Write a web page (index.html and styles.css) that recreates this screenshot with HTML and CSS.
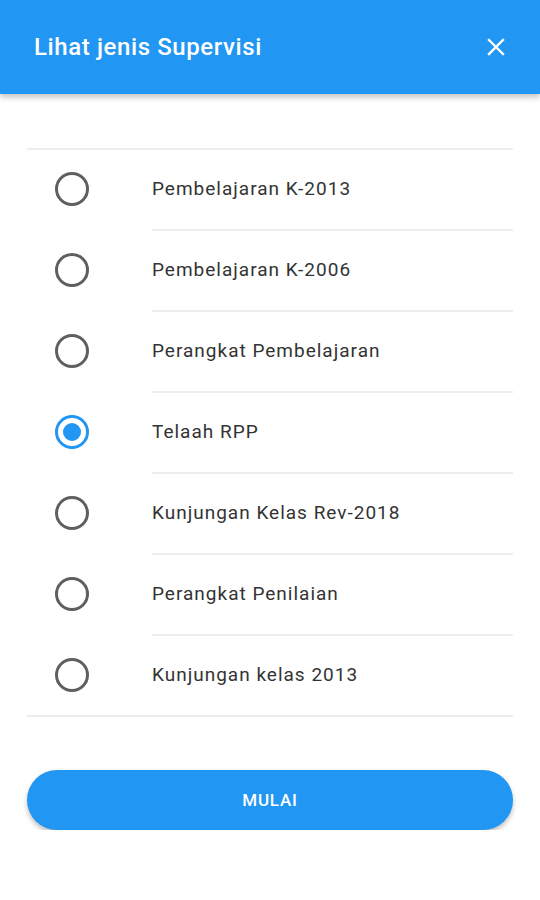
FILE: index.html
```html
<!doctype html>
<html lang="id">
  <head>
    <meta charset="UTF-8" />
    <meta name="viewport" content="width=device-width, initial-scale=1.0" />
    <title>Lihat jenis Supervisi</title>
    <link rel="stylesheet" href="styles.css">
  </head>
  <body>
    <header class="app-bar">
      <h1>Lihat jenis Supervisi</h1>
      <button class="close-btn" aria-label="Tutup">
        <svg width="24" height="24" viewBox="0 0 24 24">
          <path d="M5 5L19 19M19 5L5 19" stroke="#fff" stroke-width="2.4" stroke-linecap="square" fill="none" />
        </svg>
      </button>
    </header>

    <div class="content">
      <ul class="options">
        <li class="option">
          <span class="radio"></span>
          <span class="label">Pembelajaran K-2013</span>
        </li>
        <li class="option">
          <span class="radio"></span>
          <span class="label">Pembelajaran K-2006</span>
        </li>
        <li class="option">
          <span class="radio"></span>
          <span class="label">Perangkat Pembelajaran</span>
        </li>
        <li class="option">
          <span class="radio checked"></span>
          <span class="label">Telaah RPP</span>
        </li>
        <li class="option">
          <span class="radio"></span>
          <span class="label">Kunjungan Kelas Rev-2018</span>
        </li>
        <li class="option">
          <span class="radio"></span>
          <span class="label">Perangkat Penilaian</span>
        </li>
        <li class="option">
          <span class="radio"></span>
          <span class="label">Kunjungan kelas 2013</span>
        </li>
      </ul>

      <button class="start-btn">MULAI</button>
    </div>
  </body>
</html>
```

FILE: styles.css
```css
body {
  margin: 0;
  padding: 0;
  font-family: Roboto, 'Liberation Sans', Arial, sans-serif;
  background: #fff;
  color: #333;
}

.app-bar {
  height: 94px;
  background: #2196f3;
  display: flex;
  align-items: center;
  justify-content: space-between;
  padding: 0 32px 0 34px;
  box-sizing: border-box;
  box-shadow: 0 3px 6px rgba(0, 0, 0, 0.25);
  position: relative;
  z-index: 1;
}

.app-bar h1 {
  margin: 0;
  color: #fff;
  font-size: 24px;
  font-weight: 500;
  letter-spacing: 0.6px;
}

.close-btn {
  background: none;
  border: none;
  padding: 0;
  width: 24px;
  height: 24px;
  cursor: pointer;
}

.close-btn svg {
  display: block;
}

.content {
  padding: 54px 27px 0;
}

.options {
  list-style: none;
  margin: 0;
  padding: 0;
  border-top: 2px solid #ededed;
  border-bottom: 2px solid #ededed;
}

.option {
  display: flex;
  height: 81px;
}

.radio {
  width: 125px;
  flex: none;
  position: relative;
}

.radio::before {
  content: '';
  position: absolute;
  left: 28px;
  top: 22px;
  width: 28px;
  height: 28px;
  border: 3px solid #5f5f5f;
  border-radius: 50%;
}

.radio.checked::before {
  border-color: #2196f3;
}

.radio.checked::after {
  content: '';
  position: absolute;
  left: 36px;
  top: 30px;
  width: 18px;
  height: 18px;
  background: #2196f3;
  border-radius: 50%;
}

.label {
  flex: 1;
  display: flex;
  align-items: center;
  font-size: 19px;
  letter-spacing: 1px;
  color: #333;
  border-bottom: 2px solid #ededed;
  padding-bottom: 2px;
}

.option:last-child {
  height: 79px;
}

.option:last-child .label {
  border-bottom: none;
}

.start-btn {
  display: block;
  width: 100%;
  height: 60px;
  margin-top: 53px;
  border: none;
  border-radius: 30px;
  background: #2196f3;
  color: #fff;
  font-family: Roboto, 'Liberation Sans', Arial, sans-serif;
  font-size: 17px;
  font-weight: 500;
  letter-spacing: 0.8px;
  box-shadow: 0 3px 5px rgba(0, 0, 0, 0.25);
  cursor: pointer;
}
```
